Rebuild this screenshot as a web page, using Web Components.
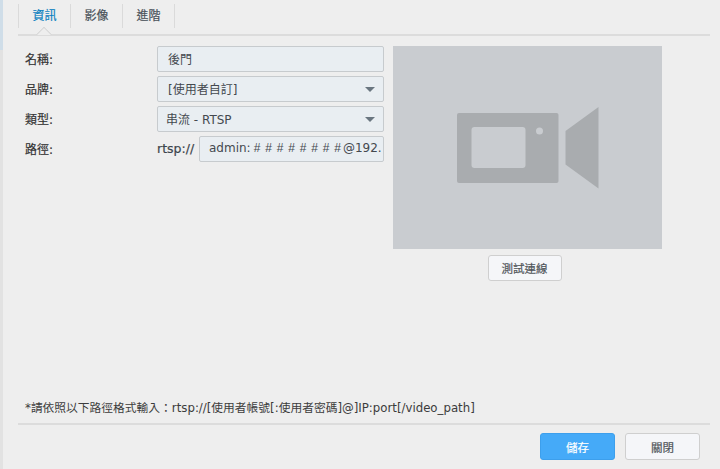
<!DOCTYPE html>
<html lang="zh-Hant">
<head>
<meta charset="utf-8">
<style>
    html, body { margin: 0; height: 469px; overflow: hidden; }
    body {
        background: #eeeeee;
        color: #3c3c3c;
        font-family: "DejaVu Sans", "Noto Sans CJK TC", sans-serif;
        font-size: 12px;
    }
</style>
</head>
<body>
<camera-dialog></camera-dialog>

<script>
class TabBar extends HTMLElement {
    constructor() {
        super();
        this.attachShadow({ mode: "open" });
        this.shadowRoot.innerHTML = `
            <style>
                :host { display: block; height: 36px; box-sizing: border-box; position: relative; border-bottom: 2px solid #dcdcdc; }
                .tabs { display: flex; padding-top: 4px; }
                .tabs ::slotted(tab-item) { border-left: 1px solid #dadada; }
                .tabs ::slotted(tab-item:last-child) { border-right: 1px solid #dadada; }
                .notch {
                    position: absolute; left: 20px; bottom: -2px; width: 11px; height: 11px;
                    background: #eeeeee; border-left: 1px solid #d0d0d0; border-top: 1px solid #d0d0d0;
                    transform: translateY(5px) rotate(45deg);
                    clip-path: polygon(0 0, 100% 0, 0 100%);
                }
            </style>
            <div class="tabs"><slot></slot></div>
            <div class="notch"></div>
        `;
    }
}

class TabItem extends HTMLElement {
    constructor() {
        super();
        this.attachShadow({ mode: "open" });
        this.shadowRoot.innerHTML = `
            <style>
                :host { display: block; width: 51px; height: 24px; line-height: 25px; text-align: center; font-size: 12px; color: #4a525a; -webkit-text-stroke: 0.2px; }
                :host([active]) { color: #0a7fc0; }
            </style>
            <slot></slot>
        `;
    }
}

class FormRow extends HTMLElement {
    constructor() {
        super();
        this.attachShadow({ mode: "open" });
        this.shadowRoot.innerHTML = `
            <style>
                :host { display: flex; height: 26px; align-items: center; }
                .label { width: 139px; padding: 0 0 2px 7px; box-sizing: border-box; font-size: 12px; color: #333333; -webkit-text-stroke: 0.2px; }
                .field { width: 227px; display: flex; align-items: center; }
            </style>
            <div class="label"><slot name="label"></slot></div>
            <div class="field"><slot></slot></div>
        `;
    }
}

class TextBox extends HTMLElement {
    constructor() {
        super();
        this.attachShadow({ mode: "open" });
        this.shadowRoot.innerHTML = `
            <style>
                :host {
                    display: flex; flex: 1; min-width: 0; height: 26px; box-sizing: border-box; align-items: center;
                    background: #e9eef2; border: 1px solid #c7cbce; border-radius: 2px;
                    padding: 0 0 2px var(--pad, 10px); font-size: 12px; color: #44494f; white-space: nowrap; overflow: hidden;
                }
                :host([dropdown]) { padding-right: 8px; }
                .text { flex: 1; min-width: 0; overflow: hidden; }
                .arrow { display: none; width: 0; height: 0; border: 5px solid transparent; border-top: 5px solid #6a7680; border-bottom: 0; margin: 2px 0 0 4px; }
                :host([dropdown]) .arrow { display: block; }
            </style>
            <div class="text"><slot></slot></div>
            <div class="arrow"></div>
        `;
    }
}

class PushButton extends HTMLElement {
    constructor() {
        super();
        this.attachShadow({ mode: "open" });
        this.shadowRoot.innerHTML = `
            <style>
                :host {
                    display: flex; align-items: center; justify-content: center; box-sizing: border-box;
                    width: 74px; height: 26px; font-size: 11.5px; color: #50555a; -webkit-text-stroke: 0.2px;
                    background: #f5f6f9; border: 1px solid #cfcfcf; border-radius: 3px;
                }
                :host([primary]) { background: #45aaf8; border-color: #3d9fec; color: #ffffff; }
            </style>
            <slot></slot>
        `;
    }
}

class CameraPreview extends HTMLElement {
    constructor() {
        super();
        this.attachShadow({ mode: "open" });
        this.shadowRoot.innerHTML = `
            <style>
                :host { display: flex; align-items: center; justify-content: center; width: 269px; height: 203px; background: #c9ccd0; }
                svg { display: block; }
            </style>
            <svg width="269" height="203" viewBox="0 0 269 203">
                <rect x="64" y="67" width="101.500" height="70" rx="2" fill="#a9acaf"/>
                <rect x="78.500" y="81" width="54" height="41" rx="3" fill="#c9ccd0"/>
                <circle cx="146.500" cy="85" r="3.500" fill="#c9ccd0"/>
                <path d="M172.500 85 L205.500 61 V142.500 L172.500 118.500 Z" fill="#a9acaf"/>
            </svg>
        `;
    }
}

class CameraDialog extends HTMLElement {
    constructor() {
        super();
        this.attachShadow({ mode: "open" });
        this.shadowRoot.innerHTML = `
            <style>
                :host { display: block; width: 720px; height: 469px; position: relative; box-sizing: border-box; padding: 0 10px 0 18px; }
                .strip {
                    position: absolute; left: 0; top: 0; width: 3px; height: 469px;
                    background: linear-gradient(#cfdde8 0, #cfdde8 50px, #e2e2e2 50px);
                }
                .body { display: flex; height: 364px; padding-top: 10px; box-sizing: border-box; }
                .form { width: 366px; display: flex; flex-direction: column; gap: 4px; }
                .rtsp { display: flex; align-items: center; width: 100%; }
                .rtsp > span { width: 42px; font-size: 12.500px; color: #3c444c; padding-bottom: 2px; -webkit-text-stroke: 0.2px; }
                .mask { font-family: "Liberation Sans", sans-serif; word-spacing: 1.500px; margin: 0 2px 0 3px; }
                .side { margin-left: 9px; display: flex; flex-direction: column; align-items: center; gap: 6px; }
                .side push-button { margin-right: 6px; }
                .note { height: 17px; line-height: 17px; padding-left: 7px; font-size: 11.750px; color: #3c3c3c; white-space: nowrap; }
                .rule { height: 2px; background: #dcdcdc; margin-top: 6px; }
                .foot { display: flex; justify-content: flex-end; gap: 10px; padding: 8px 10px 0 0; }
                .foot push-button { width: 75px; height: 27px; }
            </style>
            <div class="strip"></div>
            <tab-bar>
                <tab-item active>資訊</tab-item>
                <tab-item>影像</tab-item>
                <tab-item>進階</tab-item>
            </tab-bar>
            <div class="body">
                <div class="form">
                    <form-row><span slot="label">名稱:</span><text-box>後門</text-box></form-row>
                    <form-row><span slot="label">品牌:</span><text-box dropdown>[使用者自訂]</text-box></form-row>
                    <form-row><span slot="label">類型:</span><text-box dropdown style="--pad: 8px">串流 - RTSP</text-box></form-row>
                    <form-row><span slot="label">路徑:</span>
                        <div class="rtsp"><span>rtsp://</span><text-box style="--pad: 9px">admin:<b class="mask" style="font-weight: 400"># # # # # # # #</b>@192.</text-box></div>
                    </form-row>
                </div>
                <div class="side">
                    <camera-preview></camera-preview>
                    <push-button>測試連線</push-button>
                </div>
            </div>
            <div class="note">*請依照以下路徑格式輸入：rtsp://[使用者帳號[:使用者密碼]@]IP:port[/video_path]</div>
            <div class="rule"></div>
            <div class="foot">
                <push-button primary>儲存</push-button>
                <push-button>關閉</push-button>
            </div>
        `;
    }
}

customElements.define("tab-bar", TabBar);
customElements.define("tab-item", TabItem);
customElements.define("form-row", FormRow);
customElements.define("text-box", TextBox);
customElements.define("push-button", PushButton);
customElements.define("camera-preview", CameraPreview);
customElements.define("camera-dialog", CameraDialog);
</script>
</body>
</html>
